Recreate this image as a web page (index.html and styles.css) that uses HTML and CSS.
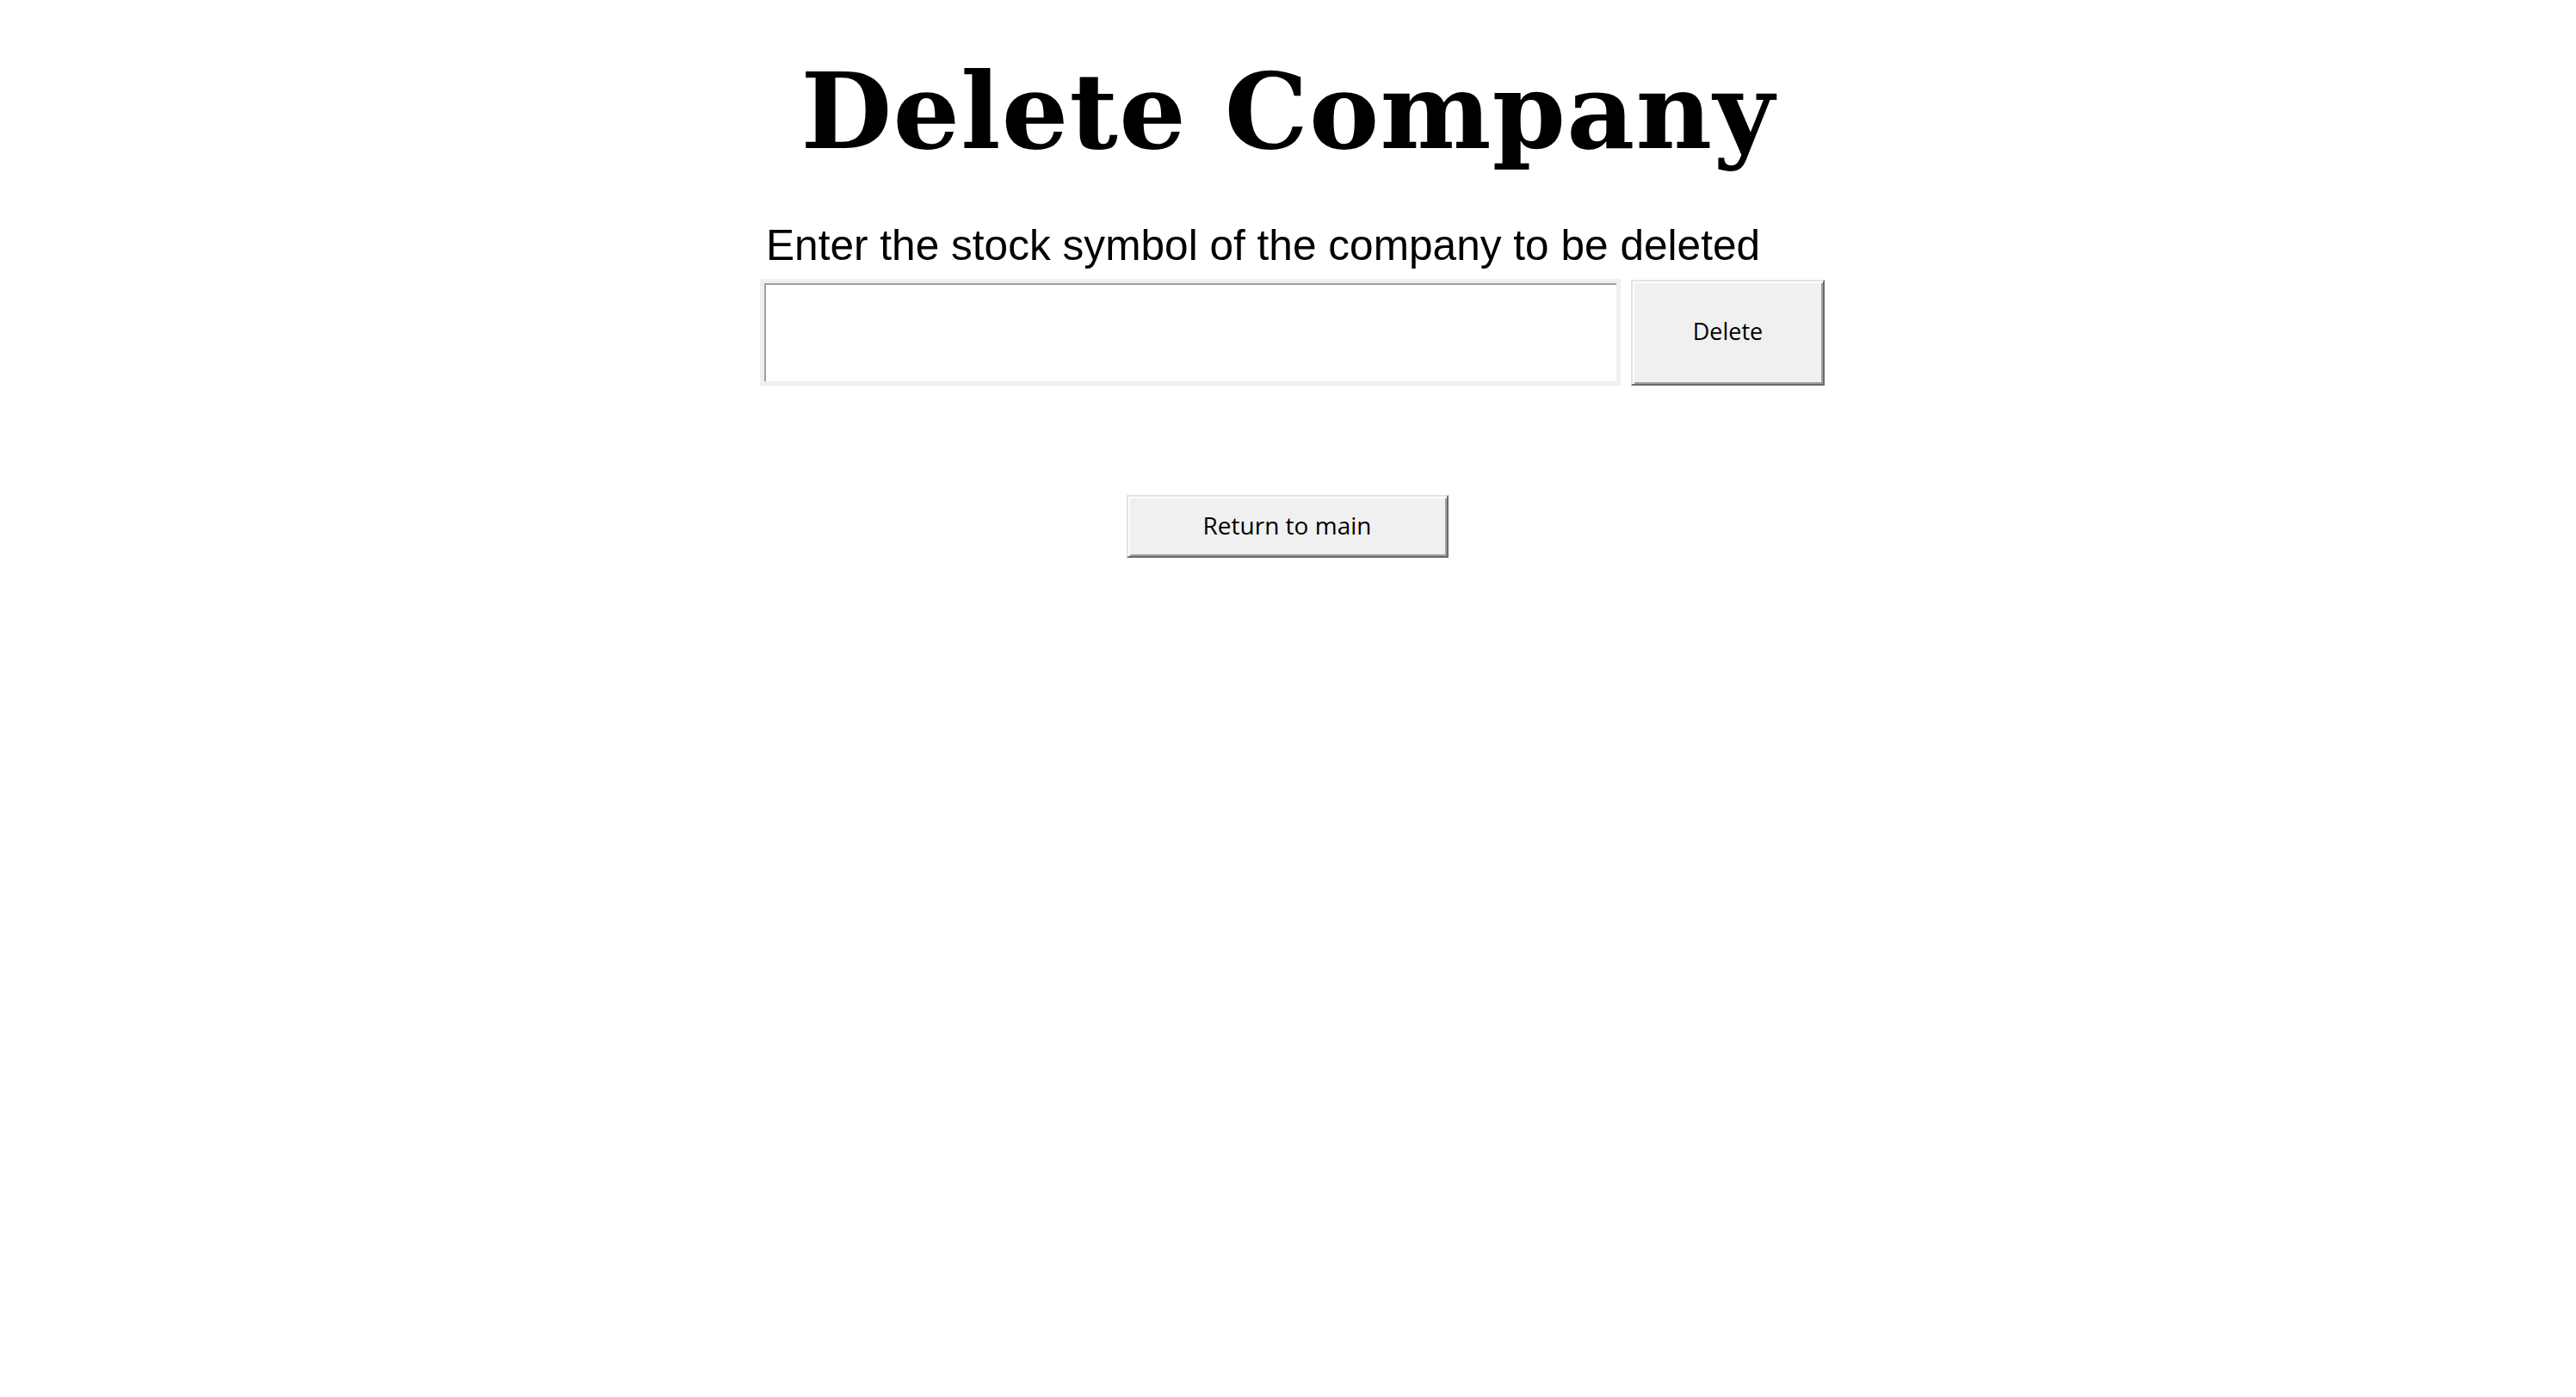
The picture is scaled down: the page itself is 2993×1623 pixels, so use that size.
FILE: index.html
```html
<!DOCTYPE html>
<html>
<head>
<meta charset="utf-8">
<title>Delete Company</title>
<link rel="stylesheet" href="styles.css">
</head>
<body>
<main class="page">
  <h1 class="title">Delete Company</h1>
  <section class="form">
    <div class="label">Enter the stock symbol of the company to be deleted</div>
    <div class="row">
      <input class="entry" type="text">
      <button class="btn btn-delete">Delete</button>
    </div>
  </section>
  <button class="btn btn-return">Return to main</button>
</main>
</body>
</html>
```
FILE: styles.css
```css
html, body {
  margin: 0;
  padding: 0;
  background: #ffffff;
}
.page {
  display: flex;
  flex-direction: column;
  align-items: center;
  padding-top: 68px;
}
.title {
  margin: 0;
  font-family: "DejaVu Serif", "Liberation Serif", serif;
  font-weight: bold;
  font-size: 122px;
  letter-spacing: 1.2px;
  line-height: 1;
  color: #000;
  white-space: nowrap;
}
.form {
  display: flex;
  flex-direction: column;
  width: 1237px;
  margin-top: 71px;
  margin-left: 10px;
}
.label {
  font-family: "Liberation Sans", Arial, sans-serif;
  font-size: 49.6px;
  line-height: 1;
  color: #000;
  padding-left: 7px;
  white-space: nowrap;
}
.row {
  display: flex;
  align-items: flex-start;
  gap: 12px;
  margin-top: 13px;
}
.entry {
  box-sizing: border-box;
  width: 1000px;
  height: 124px;
  margin: 0;
  padding: 0 8px;
  border: 5px solid #f0f0f0;
  background: #ffffff;
  box-shadow: inset 2px 2px 0 #a0a0a0;
  outline: none;
  font-family: "Liberation Sans", Arial, sans-serif;
  font-size: 40px;
}
.btn {
  box-sizing: border-box;
  margin: 0;
  padding: 0 0 3px 0;
  background: #f0f0f0;
  border: 2px solid;
  border-color: #e3e3e3 #696969 #696969 #e3e3e3;
  box-shadow: inset 2px 2px 0 #ffffff, inset -2px -2px 0 #a0a0a0;
  font-family: "Open Sans", "Noto Sans", sans-serif;
  color: #000;
  line-height: 1;
}
.btn-delete {
  width: 225px;
  height: 123px;
  margin-top: 1px;
  font-size: 27px;
}
.btn-return {
  width: 374px;
  height: 73px;
  margin-top: 127px;
  margin-right: 2px;
  font-size: 28px;
}
```
